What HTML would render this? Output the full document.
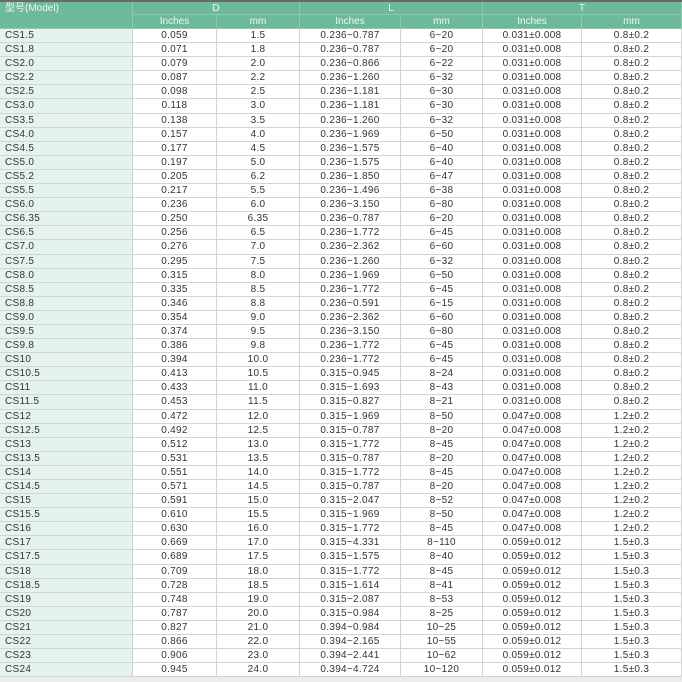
<!DOCTYPE html>
<html><head><meta charset="utf-8"><style>
*{margin:0;padding:0;box-sizing:border-box}
body{width:682px;height:682px;background:#ececec;overflow:hidden;font-family:"Liberation Sans","Noto Sans CJK SC",sans-serif;font-size:10px;color:#333}
.top{position:absolute;left:0;top:0;width:682px;height:2px;background:#6a6a6a}
.h{position:absolute;background:#6db99b;color:#eef8f3;font-size:10px;text-align:center;line-height:13px;border-right:1px solid #8ccab0;border-bottom:1px solid #8ccab0}
.g{position:absolute;left:0;top:29px;display:grid;grid-template-columns:133px 84px 83px 101px 82px 99px 100px;grid-template-rows:repeat(46,14.1px)}
.g div{border-bottom:1px solid #d4d4d4;border-right:1px solid #d4d4d4;text-align:center;line-height:13.5px;background:#fff;letter-spacing:0.3px}
.g div.m{text-align:left;padding-left:5px;background:#e5f3ed;border-right:1px solid #c6d6cf}
</style></head><body>
<div class="top"></div>
<div class="h" style="left:0;top:2px;width:133px;height:27px;text-align:left;padding-left:5px;line-height:14px">型号(Model)</div>
<div class="h" style="left:133px;top:2px;width:167px;height:13px">D</div>
<div class="h" style="left:300px;top:2px;width:183px;height:13px">L</div>
<div class="h" style="left:483px;top:2px;width:199px;height:13px">T</div>
<div class="h" style="left:133px;top:15px;width:84px;height:14px">Inches</div>
<div class="h" style="left:217px;top:15px;width:83px;height:14px">mm</div>
<div class="h" style="left:300px;top:15px;width:101px;height:14px">Inches</div>
<div class="h" style="left:401px;top:15px;width:82px;height:14px">mm</div>
<div class="h" style="left:483px;top:15px;width:99px;height:14px">Inches</div>
<div class="h" style="left:582px;top:15px;width:100px;height:14px">mm</div>
<div class="g">
<div class="m">CS1.5</div><div>0.059</div><div>1.5</div><div>0.236~0.787</div><div>6~20</div><div>0.031±0.008</div><div>0.8±0.2</div>
<div class="m">CS1.8</div><div>0.071</div><div>1.8</div><div>0.236~0.787</div><div>6~20</div><div>0.031±0.008</div><div>0.8±0.2</div>
<div class="m">CS2.0</div><div>0.079</div><div>2.0</div><div>0.236~0.866</div><div>6~22</div><div>0.031±0.008</div><div>0.8±0.2</div>
<div class="m">CS2.2</div><div>0.087</div><div>2.2</div><div>0.236~1.260</div><div>6~32</div><div>0.031±0.008</div><div>0.8±0.2</div>
<div class="m">CS2.5</div><div>0.098</div><div>2.5</div><div>0.236~1.181</div><div>6~30</div><div>0.031±0.008</div><div>0.8±0.2</div>
<div class="m">CS3.0</div><div>0.118</div><div>3.0</div><div>0.236~1.181</div><div>6~30</div><div>0.031±0.008</div><div>0.8±0.2</div>
<div class="m">CS3.5</div><div>0.138</div><div>3.5</div><div>0.236~1.260</div><div>6~32</div><div>0.031±0.008</div><div>0.8±0.2</div>
<div class="m">CS4.0</div><div>0.157</div><div>4.0</div><div>0.236~1.969</div><div>6~50</div><div>0.031±0.008</div><div>0.8±0.2</div>
<div class="m">CS4.5</div><div>0.177</div><div>4.5</div><div>0.236~1.575</div><div>6~40</div><div>0.031±0.008</div><div>0.8±0.2</div>
<div class="m">CS5.0</div><div>0.197</div><div>5.0</div><div>0.236~1.575</div><div>6~40</div><div>0.031±0.008</div><div>0.8±0.2</div>
<div class="m">CS5.2</div><div>0.205</div><div>6.2</div><div>0.236~1.850</div><div>6~47</div><div>0.031±0.008</div><div>0.8±0.2</div>
<div class="m">CS5.5</div><div>0.217</div><div>5.5</div><div>0.236~1.496</div><div>6~38</div><div>0.031±0.008</div><div>0.8±0.2</div>
<div class="m">CS6.0</div><div>0.236</div><div>6.0</div><div>0.236~3.150</div><div>6~80</div><div>0.031±0.008</div><div>0.8±0.2</div>
<div class="m">CS6.35</div><div>0.250</div><div>6.35</div><div>0.236~0.787</div><div>6~20</div><div>0.031±0.008</div><div>0.8±0.2</div>
<div class="m">CS6.5</div><div>0.256</div><div>6.5</div><div>0.236~1.772</div><div>6~45</div><div>0.031±0.008</div><div>0.8±0.2</div>
<div class="m">CS7.0</div><div>0.276</div><div>7.0</div><div>0.236~2.362</div><div>6~60</div><div>0.031±0.008</div><div>0.8±0.2</div>
<div class="m">CS7.5</div><div>0.295</div><div>7.5</div><div>0.236~1.260</div><div>6~32</div><div>0.031±0.008</div><div>0.8±0.2</div>
<div class="m">CS8.0</div><div>0.315</div><div>8.0</div><div>0.236~1.969</div><div>6~50</div><div>0.031±0.008</div><div>0.8±0.2</div>
<div class="m">CS8.5</div><div>0.335</div><div>8.5</div><div>0.236~1.772</div><div>6~45</div><div>0.031±0.008</div><div>0.8±0.2</div>
<div class="m">CS8.8</div><div>0.346</div><div>8.8</div><div>0.236~0.591</div><div>6~15</div><div>0.031±0.008</div><div>0.8±0.2</div>
<div class="m">CS9.0</div><div>0.354</div><div>9.0</div><div>0.236~2.362</div><div>6~60</div><div>0.031±0.008</div><div>0.8±0.2</div>
<div class="m">CS9.5</div><div>0.374</div><div>9.5</div><div>0.236~3.150</div><div>6~80</div><div>0.031±0.008</div><div>0.8±0.2</div>
<div class="m">CS9.8</div><div>0.386</div><div>9.8</div><div>0.236~1.772</div><div>6~45</div><div>0.031±0.008</div><div>0.8±0.2</div>
<div class="m">CS10</div><div>0.394</div><div>10.0</div><div>0.236~1.772</div><div>6~45</div><div>0.031±0.008</div><div>0.8±0.2</div>
<div class="m">CS10.5</div><div>0.413</div><div>10.5</div><div>0.315~0.945</div><div>8~24</div><div>0.031±0.008</div><div>0.8±0.2</div>
<div class="m">CS11</div><div>0.433</div><div>11.0</div><div>0.315~1.693</div><div>8~43</div><div>0.031±0.008</div><div>0.8±0.2</div>
<div class="m">CS11.5</div><div>0.453</div><div>11.5</div><div>0.315~0.827</div><div>8~21</div><div>0.031±0.008</div><div>0.8±0.2</div>
<div class="m">CS12</div><div>0.472</div><div>12.0</div><div>0.315~1.969</div><div>8~50</div><div>0.047±0.008</div><div>1.2±0.2</div>
<div class="m">CS12.5</div><div>0.492</div><div>12.5</div><div>0.315~0.787</div><div>8~20</div><div>0.047±0.008</div><div>1.2±0.2</div>
<div class="m">CS13</div><div>0.512</div><div>13.0</div><div>0.315~1.772</div><div>8~45</div><div>0.047±0.008</div><div>1.2±0.2</div>
<div class="m">CS13.5</div><div>0.531</div><div>13.5</div><div>0.315~0.787</div><div>8~20</div><div>0.047±0.008</div><div>1.2±0.2</div>
<div class="m">CS14</div><div>0.551</div><div>14.0</div><div>0.315~1.772</div><div>8~45</div><div>0.047±0.008</div><div>1.2±0.2</div>
<div class="m">CS14.5</div><div>0.571</div><div>14.5</div><div>0.315~0.787</div><div>8~20</div><div>0.047±0.008</div><div>1.2±0.2</div>
<div class="m">CS15</div><div>0.591</div><div>15.0</div><div>0.315~2.047</div><div>8~52</div><div>0.047±0.008</div><div>1.2±0.2</div>
<div class="m">CS15.5</div><div>0.610</div><div>15.5</div><div>0.315~1.969</div><div>8~50</div><div>0.047±0.008</div><div>1.2±0.2</div>
<div class="m">CS16</div><div>0.630</div><div>16.0</div><div>0.315~1.772</div><div>8~45</div><div>0.047±0.008</div><div>1.2±0.2</div>
<div class="m">CS17</div><div>0.669</div><div>17.0</div><div>0.315~4.331</div><div>8~110</div><div>0.059±0.012</div><div>1.5±0.3</div>
<div class="m">CS17.5</div><div>0.689</div><div>17.5</div><div>0.315~1.575</div><div>8~40</div><div>0.059±0.012</div><div>1.5±0.3</div>
<div class="m">CS18</div><div>0.709</div><div>18.0</div><div>0.315~1.772</div><div>8~45</div><div>0.059±0.012</div><div>1.5±0.3</div>
<div class="m">CS18.5</div><div>0.728</div><div>18.5</div><div>0.315~1.614</div><div>8~41</div><div>0.059±0.012</div><div>1.5±0.3</div>
<div class="m">CS19</div><div>0.748</div><div>19.0</div><div>0.315~2.087</div><div>8~53</div><div>0.059±0.012</div><div>1.5±0.3</div>
<div class="m">CS20</div><div>0.787</div><div>20.0</div><div>0.315~0.984</div><div>8~25</div><div>0.059±0.012</div><div>1.5±0.3</div>
<div class="m">CS21</div><div>0.827</div><div>21.0</div><div>0.394~0.984</div><div>10~25</div><div>0.059±0.012</div><div>1.5±0.3</div>
<div class="m">CS22</div><div>0.866</div><div>22.0</div><div>0.394~2.165</div><div>10~55</div><div>0.059±0.012</div><div>1.5±0.3</div>
<div class="m">CS23</div><div>0.906</div><div>23.0</div><div>0.394~2.441</div><div>10~62</div><div>0.059±0.012</div><div>1.5±0.3</div>
<div class="m">CS24</div><div>0.945</div><div>24.0</div><div>0.394~4.724</div><div>10~120</div><div>0.059±0.012</div><div>1.5±0.3</div>
</div>
</body></html>
